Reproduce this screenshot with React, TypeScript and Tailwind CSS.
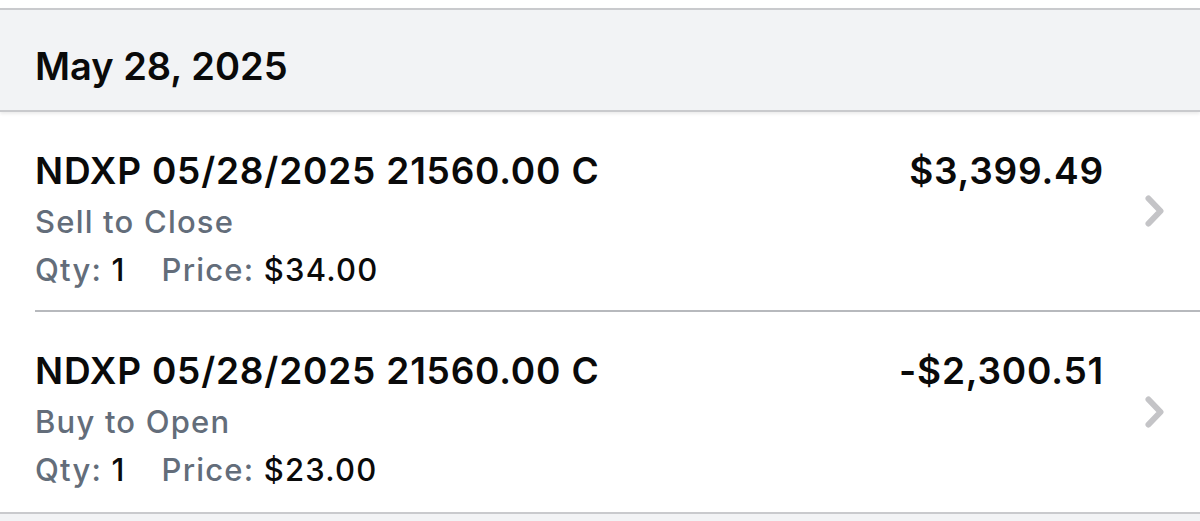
import React from "react";

const Chevron = () => (
  <svg width="22" height="34" viewBox="0 0 22 34" className="block">
    <path d="M4.5 4.5 L16.5 17 L4.5 29.5" fill="none" stroke="#c4c4c7" strokeWidth="6" strokeLinecap="round" strokeLinejoin="round" />
  </svg>
);

type Tx = { title: string; action: string; qty: string; price: string; amount: string };

const rows: Tx[] = [
  { title: "NDXP 05/28/2025 21560.00 C", action: "Sell to Close", qty: "1", price: "$34.00", amount: "$3,399.49" },
  { title: "NDXP 05/28/2025 21560.00 C", action: "Buy to Open", qty: "1", price: "$23.00", amount: "-$2,300.51" },
];

function Row({ tx, last }: { tx: Tx; last: boolean }) {
  return (
    <div className={last ? "border-b-2 border-[#c9cacd]" : "pl-[35px]"}>
      <div
        className={
          "flex h-[200px] items-center " +
          (last ? "pl-[35px]" : "border-b-2 border-[#b7b9bd]")
        }
      >
        <div className="flex-1 self-start pt-[35px]">
          <div className="flex justify-between">
            <div className="text-[37px] leading-[48px] font-semibold tracking-[0.8px] text-[#0a0a0a]">{tx.title}</div>
            <div className="text-[37px] leading-[48px] font-semibold tracking-[0.8px] text-[#0a0a0a]">{tx.amount}</div>
          </div>
          <div className="mt-[3px] text-[31px] leading-[48px] font-medium tracking-[1.2px] text-[#636d7a]">{tx.action}</div>
          <div className="text-[31px] leading-[48px] font-medium tracking-[1.2px]">
            <span className="text-[#636d7a]">Qty: </span>
            <span className="text-[#0a0a0a]">{tx.qty}</span>
            <span className="ml-[36px] text-[#636d7a]">Price: </span>
            <span className="text-[#0a0a0a]">{tx.price}</span>
          </div>
        </div>
        <div className="ml-[40px] mr-[34px] w-[22px]">
          <Chevron />
        </div>
      </div>
    </div>
  );
}

export default function App() {
  return (
    <div
      className="w-[1200px] h-[521px] overflow-hidden bg-white"
      style={{ fontFamily: "Inter, 'Liberation Sans', sans-serif" }}
    >
      <div className="h-[8px] bg-white" />
      <div className="relative z-10 flex h-[104px] items-center border-y-2 border-[#c9cacd] bg-[#f2f3f5] pl-[35px] pt-[12px] shadow-[0_2px_3px_rgba(0,0,0,0.08)]">
        <div className="text-[38px] leading-[48px] font-semibold text-[#0a0a0a]">May 28, 2025</div>
      </div>
      {rows.map((tx, i) => (
        <Row key={i} tx={tx} last={i === rows.length - 1} />
      ))}
      <div className="h-[20px] bg-[#f2f3f5]" />
    </div>
  );
}
